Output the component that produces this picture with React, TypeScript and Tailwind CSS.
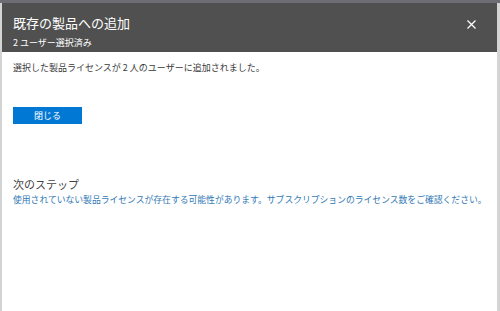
import React from "react";

export default function App() {
  const font = { fontFamily: '"Noto Sans CJK JP", "Noto Sans", sans-serif' };
  return (
    <div className="w-[500px] h-[311px] bg-white flex flex-col overflow-hidden" style={font}>
      <div className="h-[3px] bg-[#6d6d73] shrink-0" />
      <div className="flex flex-1 min-h-0">
        <div className="w-[2px] bg-[#d4d4d4] shrink-0" />
        <div className="flex-1 flex flex-col min-w-0">
          <div className="h-[49px] bg-[#505050] flex shrink-0">
            <div className="flex-1 pl-[11px] pt-[11px] flex flex-col">
              <div className="text-[13px] leading-[18px] text-white">既存の製品への追加</div>
              <div className="text-[9px] leading-[12px] text-white mt-[5px]">2 ユーザー選択済み</div>
            </div>
            <div className="pt-[17px] pr-[21px]">
              <svg width="9" height="9" viewBox="0 0 9 9">
                <path d="M0.5 0.5 L8.5 8.5 M8.5 0.5 L0.5 8.5" stroke="#ffffff" strokeWidth="1.2" />
              </svg>
            </div>
          </div>
          <div className="flex-1 pl-[11px] pt-[10px] flex flex-col">
            <div className="text-[9px] leading-[12px] text-[#3a3a3a]">
              選択した製品ライセンスが 2 人のユーザーに追加されました。
            </div>
            <button className="mt-[33px] w-[69px] h-[17px] bg-[#0078d4] text-white text-[9px] leading-[17px] text-center">
              閉じる
            </button>
            <div className="mt-[53px] text-[11px] leading-[14px] text-[#444444]">次のステップ</div>
            <div className="mt-[3px] text-[8.8px] leading-[12px] text-[#3179b5] whitespace-nowrap">
              使用されていない製品ライセンスが存在する可能性があります。サブスクリプションのライセンス数をご確認ください。
            </div>
          </div>
        </div>
        <div className="w-[3px] bg-[#d4d4d4] shrink-0" />
      </div>
    </div>
  );
}
